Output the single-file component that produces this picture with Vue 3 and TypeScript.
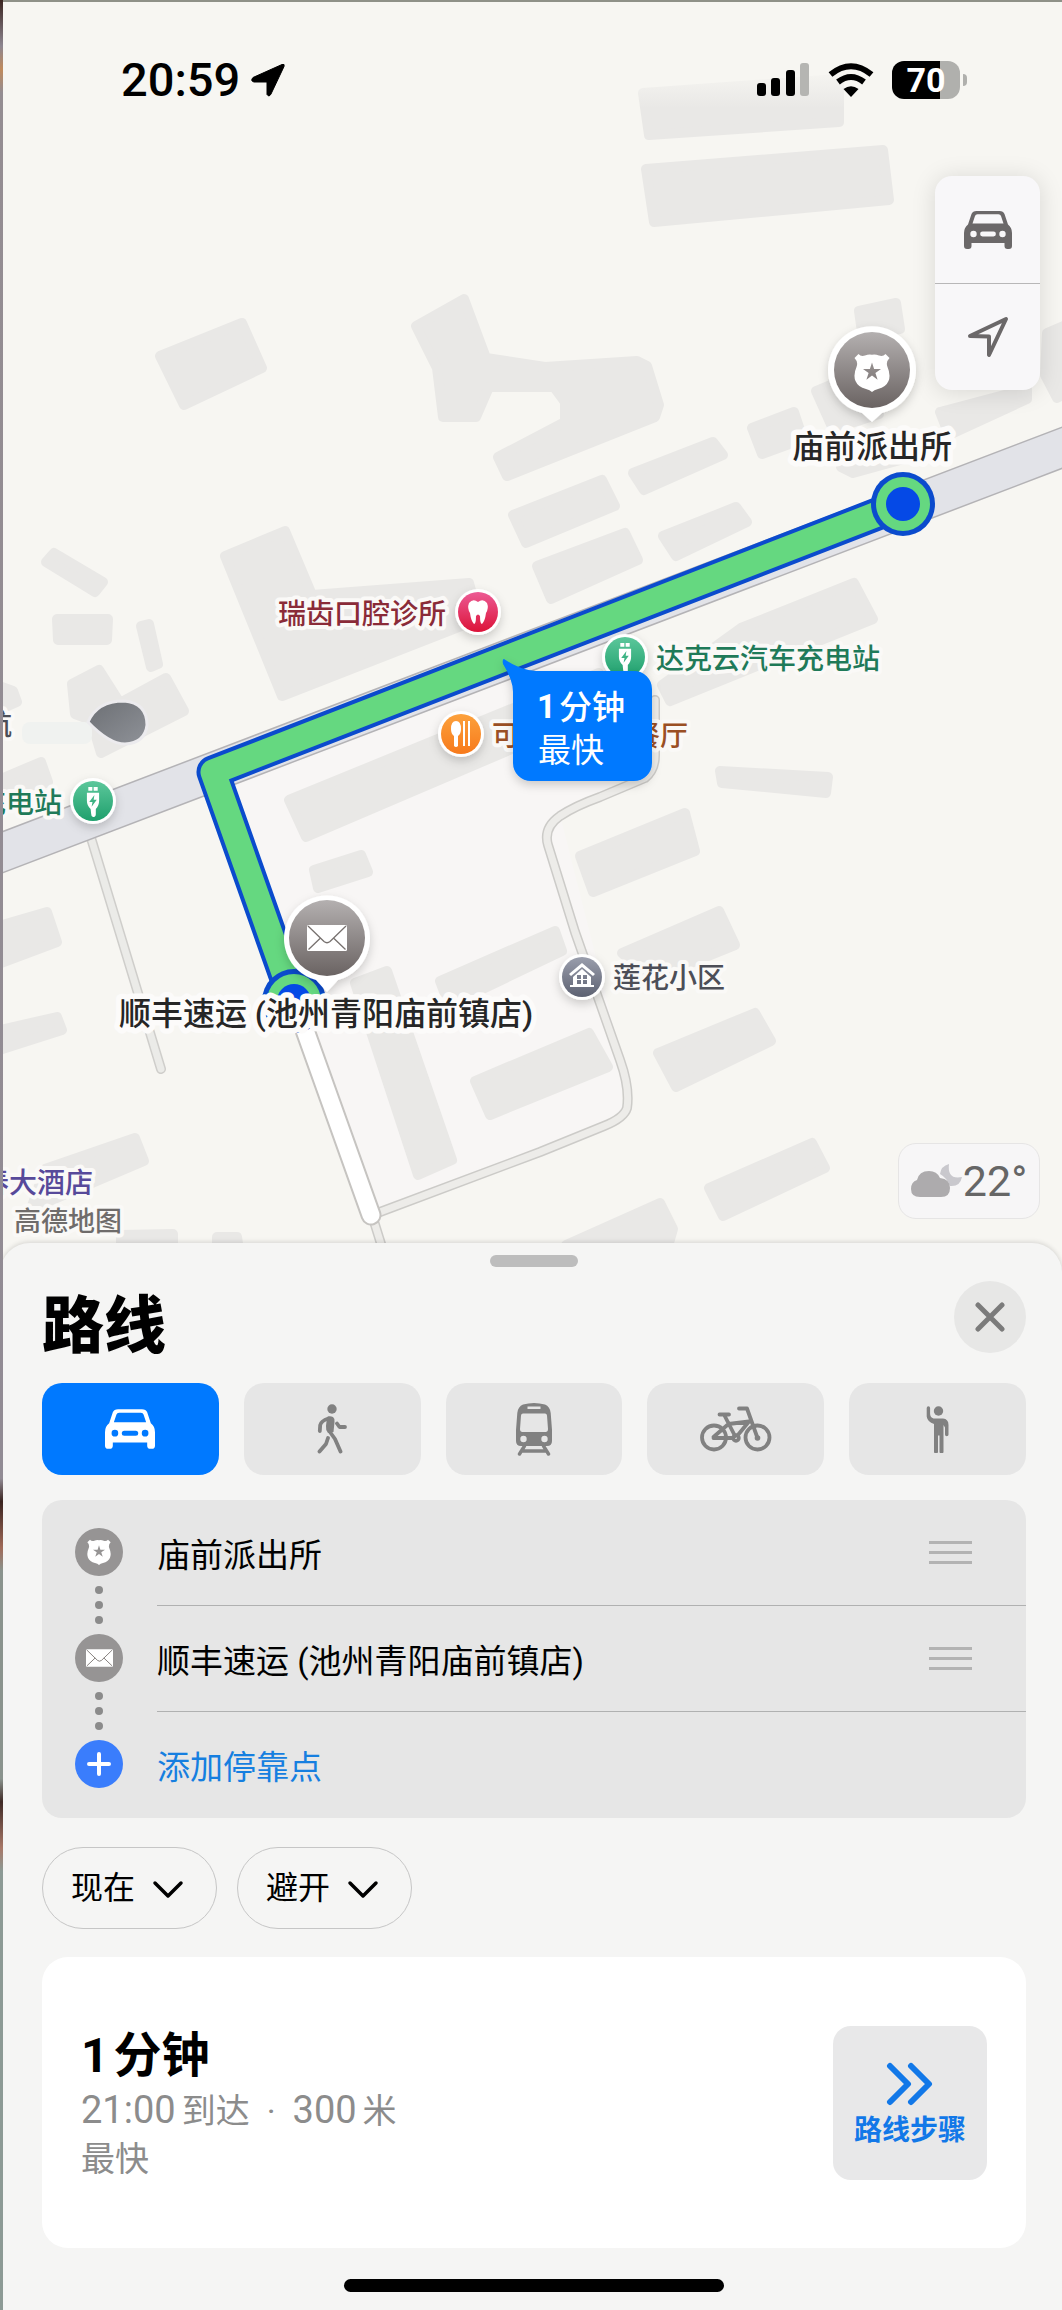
<script setup lang="ts">
import { ref } from 'vue'

interface Mode {
  id: string
  label: string
  width: number
  height: number
}

const modes: Mode[] = [
  { id: 'car', label: '驾车', width: 50, height: 40 },
  { id: 'walk', label: '步行', width: 30, height: 50 },
  { id: 'train', label: '公共交通', width: 36, height: 53 },
  { id: 'bike', label: '骑行', width: 72, height: 46 },
  { id: 'hail', label: '打车', width: 23, height: 47 },
]
const activeMode = ref('car')

const stops = ['庙前派出所', '顺丰速运 (池州青阳庙前镇店)']
const departure = ref('现在')
const avoid = ref('避开')

const buildings: string[] = [
  'M160 356L242 323L262 368L184 405Z',
  'M416 326L464 299L486 358L545 367L637 361L647 366L659 405L655 417L507 476L498 457L565 422L565 402L554 387L489 387L476 417L443 417L437 368Z',
  'M643 93L839 79L839 122L649 135Z',
  'M646 169L883 150L889 200L654 222Z',
  'M859 311L896 303L900 329L863 339Z',
  'M1047 333L1066 325L1066 393L1057 398L1045 375Z',
  'M940 412L1027 389L1027 399L949 435Z',
  'M752 428L794 412L803 439L762 454Z',
  'M816 391L859 373L879 414L833 429Z',
  'M841 467L904 446L911 457L853 473Z',
  'M633 473L713 442L723 455L644 490Z',
  'M663 536L736 507L747 522L676 556Z',
  'M513 515L602 480L615 506L526 543Z',
  'M537 566L625 533L638 560L551 599Z',
  'M662 685L741 628L854 583L873 619L670 701Z',
  'M720 771L828 777L826 793L722 783Z',
  'M46 562L54 553L103 582L95 592Z',
  'M57 619L108 619L107 640L58 640Z',
  'M141 626L149 624L158 664L151 667Z',
  'M72 684L99 670L120 703L166 678L184 711L101 753L91 720L75 714Z',
  'M-4 685L13 691L17 702L-4 711Z',
  'M-4 781L41 762L48 782L-4 802Z',
  'M225 556L285 531L312 595L469 583L479 619L282 696Z',
  'M289 800L599 673L610 707L306 837Z',
  'M-4 927L47 912L57 942L-4 965Z',
  'M-4 1031L57 1017L62 1030L-4 1051Z',
  'M45 1169L135 1138L144 1161L31 1209Z',
  'M314 870L361 855L368 872L318 888Z',
  'M355 983L387 971L452 1160L418 1175Z',
  'M440 981L555 931L562 951L449 1005Z',
  'M475 1081L589 1033L608 1067L490 1115Z',
  'M580 856L685 813L695 851L593 892Z',
  'M622 953L719 911L735 945L651 979Z',
  'M658 1053L755 1013L771 1041L676 1087Z',
  'M709 1188L812 1143L825 1168L723 1216Z',
  'M566 1245L660 1203L673 1229L667 1250Z',
  'M121 1235L173 1234L173 1250L121 1250Z',
  'M217 1237L237 1237L239 1250L217 1250Z',
]

const lane = 'M372 1215L540 1152L604 1126Q624 1118 627 1108Q630 1088 620 1060L575 932L548 845Q543 828 560 816Q575 806 600 797L645 778Q655 770 655 755V700'
</script>

<template>
  <main class="screen">
    <section class="map" aria-label="地图">
      <svg class="canvas" viewBox="0 0 1062 1267">
        <defs>
          <linearGradient id="gPin" x1="0" y1="0" x2="0" y2="1">
            <stop offset="0" stop-color="#b4b0b0" /><stop offset="1" stop-color="#6a6362" />
          </linearGradient>
          <linearGradient id="gRed" x1="0" y1="0" x2="0" y2="1">
            <stop offset="0" stop-color="#ec5a94" /><stop offset="1" stop-color="#dc1338" />
          </linearGradient>
          <linearGradient id="gOrange" x1="0" y1="0" x2="0" y2="1">
            <stop offset="0" stop-color="#fca13c" /><stop offset="1" stop-color="#f77a1c" />
          </linearGradient>
          <linearGradient id="gGreen" x1="0" y1="0" x2="0" y2="1">
            <stop offset="0" stop-color="#5cc79b" /><stop offset="1" stop-color="#1fa06d" />
          </linearGradient>
          <linearGradient id="gSlate" x1="0" y1="0" x2="0" y2="1">
            <stop offset="0" stop-color="#9a9eac" /><stop offset="1" stop-color="#5d6272" />
          </linearGradient>
          <linearGradient id="gRock" x1="0" y1="0" x2="1" y2="1">
            <stop offset="0" stop-color="#6c6f74" /><stop offset="1" stop-color="#8f9298" />
          </linearGradient>
          <linearGradient id="gFade" x1="0" y1="0" x2="0" y2="1">
            <stop offset="0" stop-color="#f7f6f2" /><stop offset="1" stop-color="#f7f6f2" stop-opacity="0" />
          </linearGradient>
          <filter id="soft" x="-30%" y="-30%" width="160%" height="170%">
            <feDropShadow dx="0" dy="4" stdDeviation="5" flood-color="#000" flood-opacity="0.18" />
          </filter>
          <symbol id="car" viewBox="0 0 48 38">
            <path fill-rule="evenodd" d="M7.500 3Q8.700 0 12.500 0H35.500Q39.300 0 40.500 3L44 13.500Q48 16.500 48 22V35A3 3 0 0 1 45 38H43.500A3 3 0 0 1 40.500 35V32H7.500V35A3 3 0 0 1 4.500 38H3A3 3 0 0 1 0 35V22Q0 16.500 4 13.500ZM8.500 12.500H39.500L37 5Q36.500 3.300 34.500 3.300H13.500Q11.500 3.300 11 5ZM9.500 19.800A3.200 3.200 0 1 0 9.500 26.200A3.200 3.200 0 1 0 9.500 19.800ZM38.500 19.800A3.200 3.200 0 1 0 38.500 26.200A3.200 3.200 0 1 0 38.500 19.800ZM18.500 20.600A2.400 2.400 0 0 0 18.500 25.400H29.500A2.400 2.400 0 0 0 29.500 20.600Z" />
          </symbol>
          <symbol id="walk" viewBox="0 0 30 50">
            <circle cx="15" cy="5" r="4.700" />
            <path d="M10 13Q13 11.500 16 13Q18 14.500 17.500 18L16.500 28L11 29Q8.500 26 9 22Z" />
            <path fill="none" stroke="currentColor" stroke-linecap="round" stroke-linejoin="round" stroke-width="3.800" d="M11.500 14.500Q4 17 3.200 21L2.800 27M20 19.500L22.500 23H28M13 28L18 35L23.500 47.500M11 34L9 40L2.500 47.500" />
          </symbol>
          <symbol id="train" viewBox="0 0 36 53">
            <path fill-rule="evenodd" d="M7 1.500Q18 -1.500 29 1.500Q34 3.500 34.700 10L36 27V38Q36 43 31 43H5Q0 43 0 38V27L1.300 10Q2 3.500 7 1.500ZM11.500 3.500V6H24.500V3.500ZM7 10.500Q5.200 10.500 5 12.500L4 26Q4 29 6.500 29H29.500Q32 29 32 26L31 12.500Q30.800 10.500 29 10.500ZM7.500 32.800A3.200 3.200 0 1 0 7.500 39.200A3.200 3.200 0 1 0 7.500 32.800ZM28.500 32.800A3.200 3.200 0 1 0 28.500 39.200A3.200 3.200 0 1 0 28.500 32.800Z" />
            <path fill="none" stroke="currentColor" stroke-linecap="round" stroke-width="3.400" d="M8.500 43L3.500 51M27.500 43L32.500 51M7 48H29" />
          </symbol>
          <symbol id="bike" viewBox="0 0 72 46">
            <g fill="none" stroke="currentColor" stroke-width="3.800" stroke-linecap="round" stroke-linejoin="round">
              <circle cx="14" cy="31.500" r="12" /><circle cx="57.500" cy="31.500" r="12" />
              <circle cx="36" cy="32" r="2.800" />
              <path d="M19.500 8.500H29M24 8.500L35 30M13.500 32H33M13.500 31L28.500 18L49 15.500L37.500 29.500M57.500 32L47 2.500H39" />
            </g>
            <circle cx="57.500" cy="32" r="2.800" />
          </symbol>
          <symbol id="hail" viewBox="0 0 23 47">
            <circle cx="12.500" cy="5" r="4.700" />
            <path d="M7.500 12.500H17Q22.500 13 22.500 19V28.500A1.700 1.700 0 0 1 19 28.500V21.500L17.500 19V45.500A2 2 0 0 1 13.500 45.500V29.500H12V45.500A2 2 0 0 1 8 45.500V18Q1.500 16 .700 10.500V2A1.700 1.700 0 0 1 4.100 2V8Q4.300 11.500 7.500 12.500Z" />
          </symbol>
          <symbol id="shield" viewBox="0 0 36 39">
            <path fill-rule="evenodd" d="M4.500 1Q7 4 11 2.600Q15 .800 18 1.800Q21 .800 25 2.600Q29 4 31.500 1L35.500 5Q31.500 9 33.500 14Q37 22 34.500 28Q32 34 24 36Q20 37 18 39Q16 37 12 36Q4 34 1.500 28Q-1 22 2.500 14Q4.500 9 .500 5ZM18 9.500L15.900 16H9L14.600 20L12.400 26.700L18 22.600L23.600 26.700L21.400 20L27 16H20.100Z" />
          </symbol>
          <symbol id="mail" viewBox="0 0 40 26">
            <rect width="40" height="26" rx="1.500" />
            <path fill="none" stroke="#77716f" stroke-width="1.300" d="M1 1L17 16.500Q20 19 23 16.500L39 1M1.500 24.500L13.500 13M38.500 24.500L26.500 13" />
          </symbol>
          <symbol id="plug" viewBox="0 0 16 32">
            <path d="M3 0H7.300V4H3ZM8.700 0H13V4H8.700Z" />
            <path fill-rule="evenodd" d="M1.500 6H14.500V15Q14.500 20 11 23.500V29Q11 32 8 32Q6 31.500 6 28.500L5.500 23.500Q1.500 20 1.500 15ZM9.500 8.500L4 16H7.500L6.500 21L12 13.500H8.700Z" />
          </symbol>
        </defs>

        <rect width="1062" height="1267" fill="#f7f6f2" />
        <path d="M213 780L600 640L655 760L560 815L622 1060V1118L375 1212Z" fill="#f8f6f5" />
        <g class="buildings">
          <path v-for="shape in buildings" :key="shape" :d="shape" />
        </g>
        <rect x="630" y="68" width="220" height="40" fill="url(#gFade)" />

        <g fill="none" stroke-linecap="round" stroke-linejoin="round">
          <path d="M91 838L161 1069" stroke="#cfcecb" stroke-width="10" />
          <path d="M91 838L161 1069" stroke="#ebebe8" stroke-width="7" />
          <path :d="lane" stroke="#cccbc8" stroke-width="10" />
          <path :d="lane" stroke="#edece9" stroke-width="7" />
          <path d="M372 1215L386 1260" stroke="#cccbc8" stroke-width="10" />
          <path d="M372 1215L386 1260" stroke="#edece9" stroke-width="7" />
          <path d="M-10 857L1072 444" stroke="#b4b3b6" stroke-width="40" />
          <path d="M-10 857L1072 444" stroke="#e2e3e8" stroke-width="37" />
          <path d="M296 1005L371 1215" stroke="#c6c4c1" stroke-width="21" />
          <path d="M296 1005L371 1215" stroke="#fff" stroke-width="17" />
          <path class="route-edge" d="M903 504L213 772L294 1001" />
          <path class="route-fill" d="M903 504L213 772L294 1001" />
        </g>
        <g v-for="end in [[903, 504], [294, 1001]]" :key="end[0]">
          <circle :cx="end[0]" :cy="end[1]" r="32" fill="#0b4bcd" />
          <circle :cx="end[0]" :cy="end[1]" r="27" fill="#65d880" />
          <circle :cx="end[0]" :cy="end[1]" r="17" fill="#0549e6" />
        </g>

        <g class="poi">
          <g filter="url(#soft)">
            <circle cx="478" cy="612" r="23" fill="#fff" />
            <circle cx="461" cy="734" r="23" fill="#fff" />
            <circle cx="625" cy="657" r="23" fill="#fff" />
            <circle cx="93" cy="801" r="23" fill="#fff" />
            <circle cx="582" cy="977" r="23" fill="#fff" />
          </g>
          <circle cx="478" cy="612" r="20" fill="url(#gRed)" />
          <path fill="#fff" d="M469 603Q473 598 478 602Q483 598 487 603Q489 608 486 613Q485 621 482 624Q480 624 480 616Q478 613 476 616Q476 624 474 624Q471 621 470 613Q467 608 469 603Z" />
          <text x="278" y="624" class="dentist">瑞齿口腔诊所</text>

          <circle cx="461" cy="734" r="20" fill="url(#gOrange)" />
          <path fill="#fff" d="M456 721Q461 721 461 729Q461 734 458 736V746Q456 748 454 746V736Q451 734 451 729Q451 721 456 721ZM463 721H465V746H463ZM468 721H470V746H468Z" />
          <text x="492" y="746" class="food">可</text>
          <text x="632" y="746" class="food">餐厅</text>

          <circle cx="625" cy="657" r="20" fill="url(#gGreen)" />
          <use href="#plug" x="617" y="643" width="16" height="30" fill="#fff" />
          <text x="656" y="669" class="power">达克云汽车充电站</text>

          <circle cx="93" cy="801" r="20" fill="url(#gGreen)" />
          <use href="#plug" x="85" y="787" width="16" height="30" fill="#fff" />
          <text x="-22" y="813" class="power">充电站</text>

          <circle cx="582" cy="977" r="20" fill="url(#gSlate)" />
          <path fill="#fff" fill-rule="evenodd" d="M582 963L595 974L593 976L582 967L571 976L569 974ZM582 969L591 977V985H594V987H570V985H573V977ZM577 975V979H581V975ZM583 975V979H587V975ZM577 980V984H581V980ZM583 980V984H587V980Z" />
          <text x="613" y="988" class="home">莲花小区</text>

          <text x="-19" y="1193" class="hotel">春大酒店</text>
          <text x="-16" y="735" class="home">航</text>
          <rect x="22" y="722" width="70" height="22" rx="8" fill="#f0f2f0" />
          <path fill="url(#gRock)" stroke="#ecebee" stroke-width="3" d="M88 722Q97 701 124 701Q147 703 147 725Q145 743 125 744Q109 744 88 722Z" />
          <text x="14" y="1231" class="credit">高德地图</text>
        </g>

        <g filter="url(#soft)">
          <path fill="#fff" d="M872 422L862 413A44 44 0 1 1 882 413Z" />
          <path fill="#fff" d="M327 992L316 980A43 43 0 1 1 338 980Z" />
        </g>
        <circle cx="872" cy="370" r="38" fill="url(#gPin)" />
        <use href="#shield" x="854" y="353" width="36" height="39" fill="#fff" />
        <circle cx="327" cy="938" r="38" fill="url(#gPin)" />
        <use href="#mail" x="307" y="925" width="40" height="26" fill="#fff" />
        <g class="place">
          <text x="872" y="458" text-anchor="middle">庙前派出所</text>
          <text x="326" y="1025" text-anchor="middle">顺丰速运 (池州青阳庙前镇店)</text>
        </g>

        <g filter="url(#soft)">
          <path fill="#0079ff" d="M504 659Q520 670 536 671H634A18 18 0 0 1 652 689V763A18 18 0 0 1 634 781H531A18 18 0 0 1 513 763V692Q513 680 503 664Q502 659 504 659Z" />
        </g>
        <g class="callout">
          <text x="537" y="718" font-weight="700">1</text>
          <text x="559" y="719" font-weight="500">分钟</text>
          <text x="538" y="762">最快</text>
        </g>
      </svg>

      <div class="overlay">
        <header class="status">
          <time class="clock">20:59</time>
          <svg class="locate" width="34" height="34" viewBox="0 0 34 34"><path d="M31 1.500Q34 .500 33 3.500L20 31Q18 34.500 16 31.500V19H3Q-1 18 2 14.500Z" stroke="#000" stroke-width="1" /></svg>
          <span class="grow"></span>
          <svg class="signal" width="53" height="34" viewBox="0 0 53 34">
            <rect y="20" width="9" height="13" rx="3" /><rect x="14" y="15" width="9" height="18" rx="3" />
            <rect x="29" y="7" width="9" height="26" rx="3" /><rect x="43" width="9" height="33" rx="3" fill="#b5b5b2" />
          </svg>
          <svg class="wifi" width="46" height="34" viewBox="0 0 46 34">
            <g fill="none" stroke="#000" stroke-width="6"><path d="M2.500 11.500Q23 -5 43.500 11.500" /><path d="M10 19Q23 9 36 19" /></g>
            <path d="M15.500 26Q23 20.500 30.500 26L23 34Z" />
          </svg>
          <span class="battery">70</span>
          <span class="nub"></span>
        </header>
        <div class="controls">
          <button type="button" aria-label="地图模式"><svg width="48" height="38"><use href="#car" /></svg></button>
          <button type="button" aria-label="当前位置">
            <svg width="42" height="42" viewBox="0 0 42 42"><path fill="none" stroke="currentColor" stroke-width="4" stroke-linejoin="round" d="M39 3L22 39V20.500L3 20Z" /></svg>
          </button>
        </div>
        <div class="weather">
          <svg width="52" height="36" viewBox="0 0 52 36">
            <path fill="#c9c8cd" d="M38 1Q36 17 51 14Q49 24 39 23Q36 15 29 11Q30 3 38 1Z" />
            <path fill="#adabad" d="M9 34Q0 34 0 26Q0 19 6 17Q8 8 18 8Q26 8 29 15Q39 16 39 25Q39 34 30 34Z" />
          </svg>
          <span>22°</span>
        </div>
      </div>
    </section>

    <section class="sheet">
      <div class="grabber"></div>
      <div class="head">
        <h1>路线</h1>
        <button type="button" class="close" aria-label="关闭">
          <svg width="30" height="30" viewBox="0 0 30 30"><path fill="none" stroke="currentColor" stroke-width="5" stroke-linecap="round" d="M3 3L27 27M27 3L3 27" /></svg>
        </button>
      </div>

      <div class="modes">
        <button
          v-for="mode in modes" :key="mode.id" type="button" :aria-label="mode.label"
          :aria-pressed="activeMode === mode.id" :class="{ active: activeMode === mode.id }"
          @click="activeMode = mode.id"
        >
          <svg :width="mode.width" :height="mode.height"><use :href="'#' + mode.id" /></svg>
        </button>
      </div>

      <div class="stops">
        <div class="rail" aria-hidden="true">
          <span class="dot"><svg width="24" height="26"><use href="#shield" /></svg></span>
          <span class="link"><i></i><i></i><i></i></span>
          <span class="dot"><svg width="27" height="18"><use href="#mail" /></svg></span>
          <span class="link"><i></i><i></i><i></i></span>
          <span class="dot add"><svg width="24" height="24" viewBox="0 0 24 24"><path fill="none" stroke="currentColor" stroke-width="4" stroke-linecap="round" d="M12 2V22M2 12H22" /></svg></span>
        </div>
        <ul>
          <li v-for="stop in stops" :key="stop">
            <span>{{ stop }}</span>
            <button type="button" class="drag" aria-label="重新排序"><i></i><i></i><i></i></button>
          </li>
          <li><button type="button" class="add-stop">添加停靠点</button></li>
        </ul>
      </div>

      <div class="filters">
        <label class="pill">
          <select v-model="departure" aria-label="出发时间"><option>现在</option></select>
          <svg width="32" height="20" viewBox="0 0 32 20"><path fill="none" stroke="#000" stroke-width="3.500" stroke-linecap="round" stroke-linejoin="round" d="M3 3L16 16L29 3" /></svg>
        </label>
        <label class="pill">
          <select v-model="avoid" aria-label="避开"><option>避开</option></select>
          <svg width="32" height="20" viewBox="0 0 32 20"><path fill="none" stroke="#000" stroke-width="3.500" stroke-linecap="round" stroke-linejoin="round" d="M3 3L16 16L29 3" /></svg>
        </label>
      </div>

      <article class="result">
        <div>
          <h2><span>1</span>分钟</h2>
          <p class="facts"><span class="num">21:00</span><span>到达</span><span class="sep">·</span><span class="num">300</span><span>米</span></p>
          <p>最快</p>
        </div>
        <button type="button" class="steps">
          <svg width="48" height="44" viewBox="0 0 48 44"><path fill="none" stroke="currentColor" stroke-width="6" stroke-linecap="round" stroke-linejoin="round" d="M4 4L22 22L4 40M25 4L43 22L25 40" /></svg>
          <span>路线步骤</span>
        </button>
      </article>
      <div class="home-bar"></div>
    </section>
  </main>
</template>

<style>
body {
  margin: 0;
  background: #f5f5f4;
}
</style>

<style scoped>
.screen {
  position: relative;
  overflow: hidden;
  font-family: Roboto, "Noto Sans CJK SC", sans-serif;
  color: #000;
}
.screen::before,
.screen::after {
  content: "";
  position: absolute;
  z-index: 3;
  top: 0;
  left: 0;
}
.screen::before {
  width: 100%;
  height: 2px;
  background: #8f9188;
}
.screen::after {
  width: 3px;
  height: 100%;
  background: linear-gradient(#3a2420, #8d8690 2%, #c08a5c 3%, #948d92 4%, #918b94 64%, #3a2420 65%, #a06a58 67%, #8a938d 68%, #8a938d 77%, #3f2a26 78%, #a87868 80%, #8c9a95 81%, #8c9a95);
}
button {
  display: flex;
  align-items: center;
  justify-content: center;
  margin: 0;
  padding: 0;
  border: 0;
  background: none;
  color: inherit;
  font: inherit;
}
svg {
  display: block;
  fill: currentColor;
}
h1, h2, p, ul {
  margin: 0;
  padding: 0;
}

.map {
  position: relative;
}
.canvas {
  width: 100%;
  height: auto;
}
.buildings path {
  fill: #e9e8e6;
  stroke: #e9e8e6;
  stroke-width: 10;
  stroke-linejoin: round;
}
.route-edge {
  stroke: #0b4bcd;
  stroke-width: 33;
}
.route-fill {
  stroke: #65d880;
  stroke-width: 25;
}
.poi text {
  font-size: 28px;
  font-weight: 500;
  stroke: #faf9f7;
  stroke-width: 8;
  stroke-linejoin: round;
  paint-order: stroke;
}
.poi .dentist { fill: #8a2b38; }
.poi .food { fill: #9a4f24; }
.poi .power { fill: #1f7a59; }
.poi .home { fill: #4c4e57; }
.poi .hotel { fill: #57499a; }
.poi .credit {
  font-size: 27px;
  fill: #6f6c6b;
}
.place text {
  font-size: 32px;
  font-weight: 500;
  fill: #262626;
  stroke: #fcfbfa;
  stroke-width: 11;
  stroke-linejoin: round;
  paint-order: stroke;
}
.callout text {
  font-size: 33px;
  fill: #fff;
}

.overlay {
  position: absolute;
  inset: 0;
  display: flex;
  flex-direction: column;
  align-items: flex-end;
  padding: 60px 22px 48px 3px;
}
.status {
  display: flex;
  align-items: center;
  align-self: stretch;
  height: 40px;
  padding: 0 73px 0 118px;
}
.clock {
  font-size: 47px;
  line-height: 40px;
  font-weight: 500;
}
.locate {
  margin-left: 11px;
}
.grow {
  flex: 1;
}
.wifi {
  margin: 0 18px;
}
.battery {
  width: 68px;
  height: 38px;
  border-radius: 12px;
  background: linear-gradient(90deg, #000 70%, #b0b0ad 70%);
  color: #fff;
  font: 700 34px/38px Roboto, sans-serif;
  text-align: center;
}
.nub {
  width: 4px;
  height: 12px;
  margin-left: 3px;
  border-radius: 0 4px 4px 0;
  background: #b0b0ad;
}
.controls {
  width: 105px;
  margin-top: 76px;
  border-radius: 17px;
  background: #f8f7f9;
  box-shadow: 0 2px 24px rgba(0, 0, 0, 0.13);
  color: #6b6869;
}
.controls button {
  width: 100%;
  height: 107px;
}
.controls button + button {
  border-top: 1px solid #b8b7b8;
}
.weather {
  display: flex;
  align-items: center;
  justify-content: center;
  box-sizing: border-box;
  width: 142px;
  height: 76px;
  margin-top: auto;
  border: 1px solid #e6e5e5;
  border-radius: 18px;
  background: #f7f6f7;
  color: #666;
  font-size: 43px;
}

.sheet {
  position: relative;
  box-sizing: border-box;
  margin-top: -24px;
  padding: 12px 36px 18px 42px;
  border-radius: 30px 30px 0 0;
  background: #f5f5f4;
  box-shadow: 0 -1px 5px rgba(0, 0, 0, 0.14);
}
.grabber {
  width: 88px;
  height: 12px;
  margin: 0 auto;
  border-radius: 6px;
  background: #bdbdbd;
}
.head {
  display: flex;
  align-items: flex-start;
  justify-content: space-between;
  padding-top: 14px;
}
h1 {
  padding-top: 6px;
  font-size: 62px;
  line-height: 80px;
  font-weight: 900;
}
.close {
  width: 72px;
  height: 72px;
  border-radius: 50%;
  background: #e7e7e6;
  color: #7b7b7b;
}
.modes {
  display: flex;
  gap: 25px;
  margin-top: 16px;
}
.modes button {
  flex: 1;
  height: 92px;
  border-radius: 20px;
  background: #e6e6e6;
  color: #818181;
}
.modes .active {
  background: #0079ff;
  color: #fff;
}

.stops {
  display: flex;
  margin-top: 25px;
  border-radius: 20px;
  background: #e6e6e6;
}
.rail {
  display: flex;
  flex-direction: column;
  align-items: center;
  width: 48px;
  padding: 28px 34px 0 33px;
}
.dot {
  display: flex;
  align-items: center;
  justify-content: center;
  width: 48px;
  height: 48px;
  border-radius: 50%;
  background: #969494;
  color: #fff;
}
.dot.add {
  background: #3a7dfc;
}
.link {
  display: flex;
  flex-direction: column;
  align-items: center;
  justify-content: center;
  gap: 7px;
  height: 58px;
}
.link i {
  width: 8px;
  height: 8px;
  border-radius: 50%;
  background: #8b8b8b;
}
ul {
  flex: 1;
  list-style: none;
}
li {
  display: flex;
  align-items: center;
  justify-content: space-between;
  box-sizing: border-box;
  height: 106px;
  padding-right: 54px;
  border-bottom: 1px solid #b0b1b1;
  font-size: 33px;
}
li:last-child {
  border-bottom: 0;
}
.drag {
  flex-direction: column;
  gap: 7px;
}
.drag i {
  width: 43px;
  height: 3px;
  background: #b3b3b3;
}
.add-stop {
  color: #167fe0;
}

.filters {
  display: flex;
  gap: 20px;
  margin-top: 29px;
}
.pill {
  position: relative;
}
.pill select {
  box-sizing: border-box;
  width: 175px;
  height: 82px;
  padding: 0 72px 0 28px;
  border: 1px solid #c6c6c6;
  border-radius: 41px;
  background: transparent;
  appearance: none;
  color: #000;
  font: inherit;
  font-size: 32px;
}
.pill svg {
  position: absolute;
  top: 33px;
  right: 33px;
  pointer-events: none;
}

.result {
  display: flex;
  align-items: center;
  justify-content: space-between;
  box-sizing: border-box;
  height: 291px;
  margin-top: 28px;
  padding: 0 39px;
  border-radius: 26px;
  background: #fff;
}
h2 {
  padding-top: 4px;
  font-size: 48px;
  line-height: 60px;
  font-weight: 700;
}
h2 span {
  margin-right: 5px;
}
.result p {
  color: #8c8c8c;
  font-size: 34px;
  line-height: 48px;
}
.facts {
  display: flex;
  align-items: baseline;
}
.result .num {
  margin-right: 6px;
  font-size: 38px;
}
.sep {
  margin: 0 17px;
}
.result .steps {
  flex-direction: column;
  gap: 6px;
  width: 154px;
  height: 154px;
  padding-top: 6px;
  box-sizing: border-box;
  border-radius: 18px;
  background: #e8e8e9;
  color: #1278e8;
  font-size: 28px;
  line-height: 38px;
  font-weight: 700;
}
.home-bar {
  width: 380px;
  height: 13px;
  margin: 31px auto 0;
  border-radius: 7px;
  background: #000;
}
</style>
